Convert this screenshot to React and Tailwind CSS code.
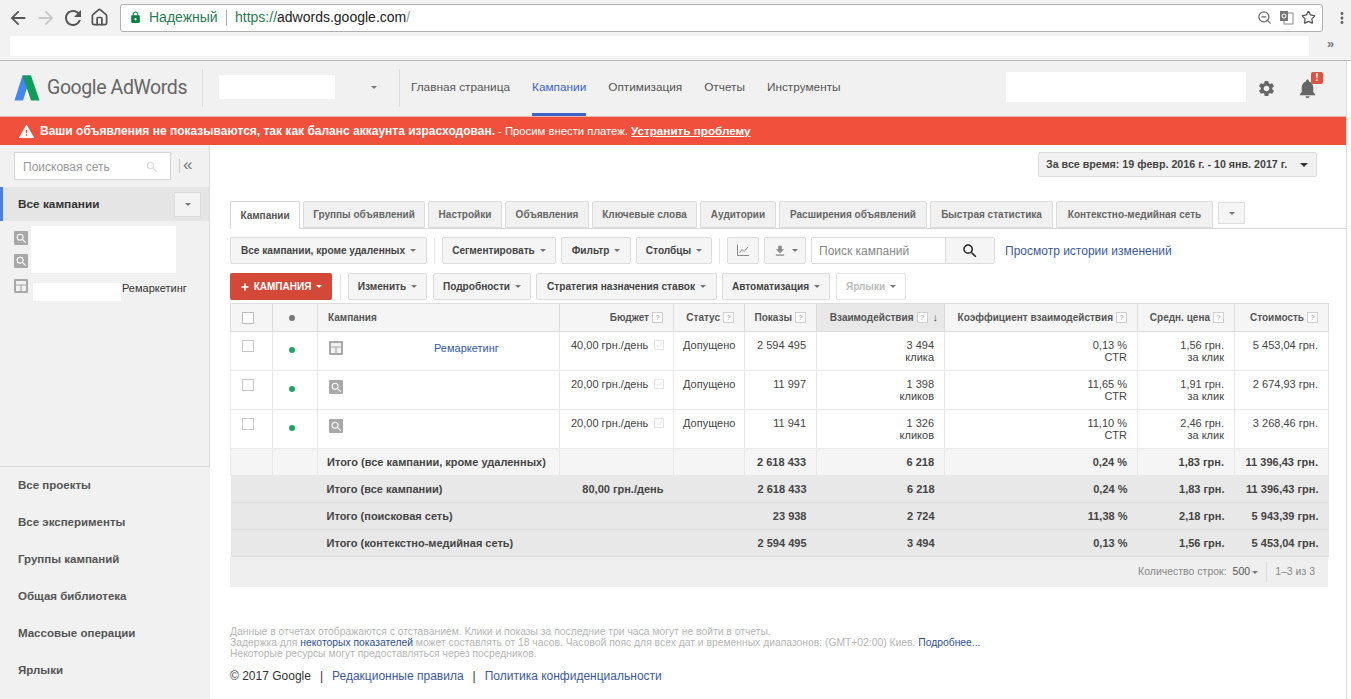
import React from "react";
import { MdArrowBack, MdArrowForward, MdRefresh, MdLock, MdSettings, MdNotifications, MdWarning, MdSearch, MdMoreVert, MdFileDownload } from "react-icons/md";
import { Home, ZoomOut, Star, Plus } from "lucide-react";

const Caret = ({ dark }) => (
  <span className={dark ? "inline-block w-0 h-0 border-x-[4px] border-t-[4px] border-x-transparent border-t-[#333]" : "inline-block w-0 h-0 border-x-[3px] border-t-[3px] border-x-transparent border-t-[#777]"} />
);

const Btn = ({ w, children, className = "" }) => (
  <div style={{ width: w }} className={"h-[27px] shrink-0 flex items-center justify-center gap-[5px] whitespace-nowrap border border-[#dcdcdc] rounded-[2px] bg-[#f5f5f5] text-[10.1px] font-bold text-[#444] " + className}>
    {children}
  </div>
);

const Tab = ({ w, label, active }) => (
  <div style={{ width: w }} className={active
    ? "h-[28px] -mb-px shrink-0 flex items-center justify-center whitespace-nowrap border border-[#d6d6d6] border-b-white bg-white rounded-t-[2px] text-[10px] font-bold text-[#555]"
    : "h-[27px] shrink-0 flex items-center justify-center whitespace-nowrap border border-[#dcdcdc] bg-[#f1f1f1] rounded-t-[2px] text-[10px] font-bold text-[#666]"}>
    {label}
  </div>
);

const Help = () => (
  <span className="inline-flex shrink-0 w-[11px] h-[11px] items-center justify-center border border-[#cfcfcf] bg-white text-[8px] leading-none font-normal text-[#aaa]">?</span>
);

const SearchIco = ({ size = 14 }) => (
  <span style={{ width: size, height: size }} className="inline-flex items-center justify-center bg-[#a8a8a8] rounded-[1px] shrink-0">
    <MdSearch className="text-white text-[13px]" />
  </span>
);

const LayoutIco = ({ size = 14 }) => (
  <svg width={size} height={size} viewBox="0 0 14 14" className="shrink-0">
    <rect x="0" y="0" width="14" height="14" rx="1" fill="#a8a8a8" />
    <rect x="2" y="2" width="10" height="10" fill="#f1f1f1" />
    <path d="M2 6h10M7 6v6" stroke="#a8a8a8" strokeWidth="1.2" />
  </svg>
);

const Th = ({ children, className = "" }) => (
  <th className={"border border-[#dcdcdc] h-[28px] px-[10px] text-[10px] font-bold text-[#555] bg-[#f5f5f5] " + className}>{children}</th>
);

const HeadCell = ({ label, extra }) => (
  <span className="flex items-center justify-end gap-[3px] whitespace-nowrap">{label}<Help />{extra}</span>
);

const rows = [
  { ico: "layout", name: "Ремаркетинг", b: "40,00 грн./день", imp: "2 594 495", i: "3 494", il: "клика", c: "0,13 %", p: "1,56 грн.", cost: "5 453,04 грн." },
  { ico: "search", name: "", b: "20,00 грн./день", imp: "11 997", i: "1 398", il: "кликов", c: "11,65 %", p: "1,91 грн.", cost: "2 674,93 грн." },
  { ico: "search", name: "", b: "20,00 грн./день", imp: "11 941", i: "1 326", il: "кликов", c: "11,10 %", p: "2,46 грн.", cost: "3 268,46 грн." },
];

const totals = [
  { n: "Итого (все кампании, кроме удаленных)", b: "", imp: "2 618 433", i: "6 218", c: "0,24 %", p: "1,83 грн.", cost: "11 396,43 грн.", first: true },
  { n: "Итого (все кампании)", b: "80,00 грн./день", imp: "2 618 433", i: "6 218", c: "0,24 %", p: "1,83 грн.", cost: "11 396,43 грн." },
  { n: "Итого (поисковая сеть)", b: "", imp: "23 938", i: "2 724", c: "11,38 %", p: "2,18 грн.", cost: "5 943,39 грн." },
  { n: "Итого (контекстно-медийная сеть)", b: "", imp: "2 594 495", i: "3 494", c: "0,13 %", p: "1,56 грн.", cost: "5 453,04 грн." },
];

const menu = ["Все проекты", "Все эксперименты", "Группы кампаний", "Общая библиотека", "Массовые операции", "Ярлыки"];

function BrowserChrome() {
  return (
    <div className="bg-[#f2f2f2] h-[61px] border-b border-[#b8b8b8] shrink-0">
      <div className="h-[35px] flex items-center">
        <div className="flex items-center w-[120px] pl-[7px] shrink-0">
          <MdArrowBack className="text-[22px] text-[#555]" />
          <MdArrowForward className="text-[22px] text-[#c8c8c8] ml-[6px]" />
          <MdRefresh className="text-[24px] text-[#555] ml-[4px]" />
          <Home size={19} strokeWidth={2.2} className="text-[#555] ml-[5px]" />
        </div>
        <div className="w-[1203px] h-[28px] bg-white border border-[#b0b0b0] rounded-[3px] flex items-center text-[14px] shrink-0">
          <MdLock className="text-[13px] text-[#0b8043] ml-[8px]" />
          <span className="ml-[7px] text-[#2b7a55] w-[68px]">Надежный</span>
          <span className="w-px h-[16px] bg-[#aaa] ml-[9px]" />
          <span className="ml-[8px] text-[#2b7a55]">https://</span>
          <span className="text-[#222]">adwords.google.com</span>
          <span className="text-[#999]">/</span>
          <span className="ml-auto flex items-center">
            <ZoomOut size={15} className="text-[#666]" />
            <svg width="15" height="15" viewBox="0 0 15 15" className="ml-[7px]">
              <rect x="5" y="3" width="9" height="11" fill="#fff" stroke="#888" />
              <rect x="1" y="1" width="8" height="10" fill="#777" />
              <circle cx="5" cy="6" r="2" fill="none" stroke="#fff" />
            </svg>
            <Star size={15} className="text-[#555] ml-[7px] mr-[6px]" />
          </span>
        </div>
        <MdMoreVert className="text-[20px] text-[#666] ml-[10px]" />
      </div>
      <div className="h-[25px] flex items-start">
        <div className="w-[1299px] h-[20px] ml-[10px] mt-[1px] bg-white" />
        <span className="ml-[18px] text-[13px] leading-[18px] font-bold text-[#777]">»</span>
      </div>
    </div>
  );
}

function Header() {
  return (
    <div className="h-[55px] bg-[#f1f1f1] flex items-center relative shrink-0">
      <svg width="26" height="26" viewBox="0 0 26 26" className="ml-[14px] -mt-[2px] shrink-0">
        <path d="M8.5 0.5 L17 0.5 L9 25.5 L0.5 25.5 Z" fill="#4285f4" />
        <path d="M8.5 0.5 L17 0.5 L25.5 25.5 L17 25.5 Z" fill="#0f9d58" />
      </svg>
      <span className="ml-[7px] w-[155px] shrink-0 text-[19.5px] -mt-[2px] text-[#666] tracking-[-0.4px]" style={{ fontFamily: "Roboto, sans-serif" }}>Google AdWords</span>
      <span className="w-px h-[38px] -mt-[2px] bg-[#dcdcdc] shrink-0" />
      <div className="w-[116px] h-[24px] -mt-[4px] bg-white ml-[16px] shrink-0" />
      <span className="ml-[36px] -mt-[2px] shrink-0 flex"><Caret /></span>
      <span className="w-px h-[38px] -mt-[2px] bg-[#dcdcdc] ml-[22px] shrink-0" />
      <nav className="flex h-full items-center text-[11.8px] text-[#555] ml-[11px]">
        <span className="-mt-[2px]">Главная страница</span>
        <span className="ml-[22px] h-full flex items-center text-[#3d63c9] border-b-[3px] border-[#3d63c9] pt-[1px]">Кампании</span>
        <span className="ml-[22px] -mt-[2px]">Оптимизация</span>
        <span className="ml-[22px] -mt-[2px]">Отчеты</span>
        <span className="ml-[22px] -mt-[2px]">Инструменты</span>
      </nav>
      <div className="ml-auto w-[240px] h-[30px] -mt-[4px] bg-white shrink-0" />
      <MdSettings className="ml-[11px] text-[19px] text-[#666] shrink-0" />
      <span className="relative ml-[20px] mr-[27px] flex shrink-0">
        <MdNotifications className="text-[23px] text-[#666]" />
        <span className="absolute -top-[5px] left-[15px] w-[12px] h-[12px] rounded-[2px] bg-[#e2513f] text-white text-[10px] leading-[12px] font-bold text-center">!</span>
      </span>
    </div>
  );
}

function Sidebar() {
  return (
    <aside className="w-[210px] mr-[2px] shrink-0 bg-[#f1f1f1] flex flex-col">
      <div className="h-[322px] border-b border-r border-[#dcdcdc] flex flex-col">
        <div className="flex items-center pt-[7px] pl-[14px]">
          <div className="w-[157px] h-[28px] bg-white border border-[#d4d4d4] flex items-center pt-[1px] pl-[8px] pr-[11px] text-[12px] text-[#999]">
            Поисковая сеть
            <MdSearch className="ml-auto text-[14px] text-[#ddd]" />
          </div>
          <span className="w-px h-[14px] bg-[#ccc] ml-[8px]" />
          <span className="ml-[3px] text-[17px] leading-none text-[#777] -mt-[3px]">«</span>
        </div>
        <div className="mt-[7px] h-[34px] bg-[#e5e5e5] border-l-[3px] border-[#4a7fe0] flex items-center pl-[15px] pr-[8px] text-[11.8px] font-bold text-[#333]">
          <span className="pt-[1px]">Все кампании</span>
          <span className="ml-auto w-[27px] h-[25px] bg-[#f3f3f3] border border-[#dcdcdc] flex items-center justify-center"><Caret /></span>
        </div>
        <div className="flex pl-[14px] pt-[5px]">
          <div className="flex flex-col gap-[9px] pt-[5px]">
            <SearchIco />
            <SearchIco />
          </div>
          <div className="ml-[3px] w-[145px] h-[47px] bg-white" />
        </div>
        <div className="flex items-start pl-[14px] pt-[6px]">
          <LayoutIco />
          <div className="ml-[5px] mt-[4px] w-[88px] h-[18px] bg-white" />
          <span className="ml-[1px] mt-[1px] text-[11px] text-[#333]">Ремаркетинг</span>
        </div>
      </div>
      <ul className="pl-[18px] text-[11.5px] font-bold text-[#555]">
        {menu.map((m) => <li key={m} className="h-[37px] flex items-center">{m}</li>)}
      </ul>
    </aside>
  );
}

function Toolbars() {
  return (
    <>
      <div className="flex mt-[8px] items-center">
        <Btn w={197}>Все кампании, кроме удаленных <Caret /></Btn>
        <span className="w-px h-[26px] bg-[#e4e4e4] mx-[7px]" />
        <Btn w={114}>Сегментировать <Caret /></Btn>
        <Btn w={70} className="ml-[5px]">Фильтр <Caret /></Btn>
        <Btn w={76} className="ml-[5px]">Столбцы <Caret /></Btn>
        <span className="w-px h-[26px] bg-[#e4e4e4] mx-[7px]" />
        <Btn w={32}>
          <svg width="14" height="13" viewBox="0 0 14 13" fill="none" stroke="#888" strokeWidth="1">
            <path d="M1.5 0.5V11.5H13" />
            <path d="M3.5 9L6 5.5L8 7.5L12 3" />
          </svg>
        </Btn>
        <Btn w={42} className="ml-[5px]"><MdFileDownload className="text-[14px] text-[#888]" /><Caret /></Btn>
        <div className="ml-[5px] h-[27px] w-[184px] border border-[#dcdcdc] rounded-[2px] flex text-[12px] text-[#888] shrink-0">
          <span className="w-[134px] bg-white flex items-center pl-[7px] border-r border-[#dcdcdc]">Поиск кампаний</span>
          <span className="flex-1 bg-[#f5f5f5] flex items-center justify-center"><MdSearch className="text-[18px] text-[#222]" /></span>
        </div>
        <span className="ml-[10px] text-[12px] text-[#3b5a9a] whitespace-nowrap">Просмотр истории изменений</span>
      </div>
      <div className="flex mt-[9px] items-center">
        <div className="w-[102px] h-[27px] shrink-0 rounded-[2px] bg-[#d34836] flex items-center justify-center gap-[4px] text-[10px] font-bold text-white">
          <Plus size={10} strokeWidth={4} /> КАМПАНИЯ <span className="inline-block w-0 h-0 border-x-[3px] border-t-[3px] border-x-transparent border-t-white ml-[1px]" />
        </div>
        <span className="w-px h-[26px] bg-[#e4e4e4] mx-[8px]" />
        <Btn w={79} className="ml-[-1px]">Изменить <Caret /></Btn>
        <Btn w={98} className="ml-[6px]">Подробности <Caret /></Btn>
        <Btn w={181} className="ml-[5px]">Стратегия назначения ставок <Caret /></Btn>
        <Btn w={108} className="ml-[5px]">Автоматизация <Caret /></Btn>
        <div className="ml-[6px] w-[70px] h-[27px] border border-[#e4e4e4] rounded-[2px] flex items-center justify-center gap-[5px] text-[10px] font-bold text-[#bbb]">Ярлыки <Caret /></div>
      </div>
    </>
  );
}

function Table() {
  const td = "border-x border-[#e8e8e8] border-b px-[10px] text-right align-top pt-[7px] leading-[12px]";
  return (
    <table className="table-fixed border-collapse w-[1098px] mt-[3px] text-[11px] text-[#444]">
      <colgroup>
        {[42, 45, 242, 114, 71, 72, 128, 193, 97, 94].map((w, i) => <col key={i} style={{ width: w }} />)}
      </colgroup>
      <thead>
        <tr>
          <Th className="!pl-0 !pr-[8px]"><span className="block w-[12px] h-[12px] mx-auto bg-white border border-[#bbb]" /></Th>
          <Th className="!pl-0 !pr-[6px]"><span className="block w-[6px] h-[6px] mx-auto rounded-full bg-[#777]" /></Th>
          <Th className="text-left">Кампания</Th>
          <Th><HeadCell label="Бюджет" /></Th>
          <Th><HeadCell label="Статус" /></Th>
          <Th><HeadCell label="Показы" /></Th>
          <Th className="!bg-[#e8e8e8] !px-[6px]"><HeadCell label="Взаимодействия" extra={<span className="text-[11px] text-[#555] ml-[2px]">↓</span>} /></Th>
          <Th><HeadCell label="Коэффициент взаимодействия" /></Th>
          <Th><HeadCell label="Средн. цена" /></Th>
          <Th><HeadCell label="Стоимость" /></Th>
        </tr>
      </thead>
      <tbody>
        {rows.map((r, i) => (
          <tr key={i} className="h-[39px] border-b border-[#e8e8e8]">
            <td className="border-x border-[#e8e8e8] align-top pt-[8px] pl-0 pr-[8px]"><span className="block w-[12px] h-[12px] mx-auto bg-white border border-[#c8c8c8]" /></td>
            <td className="border-x border-[#e8e8e8] align-top pt-[15px] pl-0 pr-[6px]"><span className="block w-[6px] h-[6px] mx-auto rounded-full bg-[#1fa463]" /></td>
            <td className="border-x border-[#e8e8e8] align-top pt-[9px] pl-[11px] pr-0">
              <div className="flex items-start">
                {r.ico === "layout" ? <LayoutIco /> : <SearchIco />}
                <span className="ml-[91px] -mt-[1px] text-[#2f5aa8]">{r.name}</span>
              </div>
            </td>
            <td className={td + " !text-left !pl-[11px] !pr-0"}>
              <div className="flex items-center whitespace-nowrap">{r.b}
                <svg width="10" height="10" viewBox="0 0 10 10" className="ml-[6px]" fill="none" stroke="#e4e4e4">
                  <rect x="0.5" y="0.5" width="9" height="9" />
                  <path d="M2.5 5L4.5 7L8 2.5" />
                </svg>
              </div>
            </td>
            <td className={td + " !text-left !pl-[9px] !pr-0"}>Допущено</td>
            <td className={td}>{r.imp}</td>
            <td className={td}>{r.i}<br />{r.il}</td>
            <td className={td}>{r.c}<br />CTR</td>
            <td className={td}>{r.p}<br />за клик</td>
            <td className={td}>{r.cost}</td>
          </tr>
        ))}
        {totals.map((t, i) => {
          const bg = t.first ? "bg-[#f5f5f5]" : "bg-[#e8e8e8]";
          const b = "h-[27px] px-[10px] text-right font-bold text-[#444] border-b border-[#dcdcdc] " + bg;
          const ln = t.first ? " border-x border-[#e8e8e8]" : "";
          return (
            <tr key={i}>
              <td className={b + ln} />
              <td className={b + ln} />
              <td className={b + ln + " !text-left !pl-[9px] !pr-0 whitespace-nowrap"}>{t.n}</td>
              <td className={b + ln + " whitespace-nowrap"}>{t.b}</td>
              <td className={b + ln} />
              <td className={b + ln}>{t.imp}</td>
              <td className={b + ln}>{t.i}</td>
              <td className={b + ln}>{t.c}</td>
              <td className={b + ln}>{t.p}</td>
              <td className={b + ln + " whitespace-nowrap !pl-0"}>{t.cost}</td>
            </tr>
          );
        })}
      </tbody>
    </table>
  );
}

function Main() {
  return (
    <main className="flex-1 min-w-0 bg-white pl-[18px] pr-[18px] overflow-hidden">
      <div className="flex justify-end pt-[7px] pr-[11px]">
        <div className="w-[279px] h-[25px] bg-[#f1f1f1] border border-[#dcdcdc] rounded-[2px] flex items-center whitespace-nowrap pl-[7px] pr-[8px] text-[10.7px] font-bold text-[#444]">
          За все время: 19 февр. 2016 г. - 10 янв. 2017 г.
          <span className="ml-auto flex"><Caret dark /></span>
        </div>
      </div>
      <div className="mt-[24px] flex items-end gap-[3px] border-b border-[#d6d6d6] -mr-[18px] h-[28px]">
        <Tab w={70} label="Кампании" active />
        <Tab w={122} label="Группы объявлений" />
        <Tab w={74} label="Настройки" />
        <Tab w={84} label="Объявления" />
        <Tab w={105} label="Ключевые слова" />
        <Tab w={76} label="Аудитории" />
        <Tab w={148} label="Расширения объявлений" />
        <Tab w={123} label="Быстрая статистика" />
        <Tab w={157} label="Контекстно-медийная сеть" />
        <div className="ml-[2px] w-[27px] h-[22px] mb-[4px] border border-[#dcdcdc] bg-[#f5f5f5] flex items-center justify-center"><Caret /></div>
      </div>
      <Toolbars />
      <Table />
      <div className="w-[1098px] h-[30px] bg-[#efefef] flex items-center justify-end text-[10.5px] text-[#888]">
        Количество строк:
        <span className="ml-[6px] text-[#555] flex items-center gap-[2px]">500 <Caret /></span>
        <span className="w-px h-[20px] bg-[#ddd] mx-[8px]" />
        <span className="mr-[13px]">1–3 из 3</span>
      </div>
      <div className="mt-[39px] text-[10.33px] leading-[11px] text-[#b5b5b5] whitespace-nowrap">
        <p>Данные в отчетах отображаются с отставанием. Клики и показы за последние три часа могут не войти в отчеты.</p>
        <p>Задержка для <span className="text-[#2f4f8f]">некоторых показателей</span> может составлять от 18 часов. Часовой пояс для всех дат и временных диапазонов: (GMT+02:00) Киев. <span className="text-[#2f4f8f]">Подробнее...</span></p>
        <p>Некоторые ресурсы могут предоставляться через посредников.</p>
      </div>
      <div className="mt-[8px] text-[12px] text-[#333] whitespace-nowrap">
        © 2017 Google<span className="mx-[9px]">|</span><span className="text-[#3b5a9a]">Редакционные правила</span><span className="mx-[9px]">|</span><span className="text-[#3b5a9a]">Политика конфиденциальности</span>
      </div>
    </main>
  );
}

export default function App() {
  return (
    <div className="w-[1351px] h-[699px] overflow-hidden flex flex-col bg-white" style={{ fontFamily: '"Liberation Sans", Arial, sans-serif' }}>
      <BrowserChrome />
      <div className="flex-1 min-h-0 flex">
        <div className="w-[1346px] flex flex-col shrink-0">
          <Header />
          <div className="h-[29px] shrink-0 bg-[#f1513c] border-t border-[#e0b8b0] flex items-center pl-[18px] text-white">
            <MdWarning className="text-[17px] mr-[5px]" />
            <b className="text-[12px]">Ваши объявления не показываются, так как баланс аккаунта израсходован.</b>
            <span className="ml-[3px] text-[11.3px]">- Просим внести платеж.</span>
            <b className="ml-[3px] text-[11.7px] underline">Устранить проблему</b>
          </div>
          <div className="flex-1 min-h-0 flex">
            <Sidebar />
            <Main />
          </div>
        </div>
        <div className="flex-1 border-l border-[#ddd] bg-white" />
      </div>
    </div>
  );
}
